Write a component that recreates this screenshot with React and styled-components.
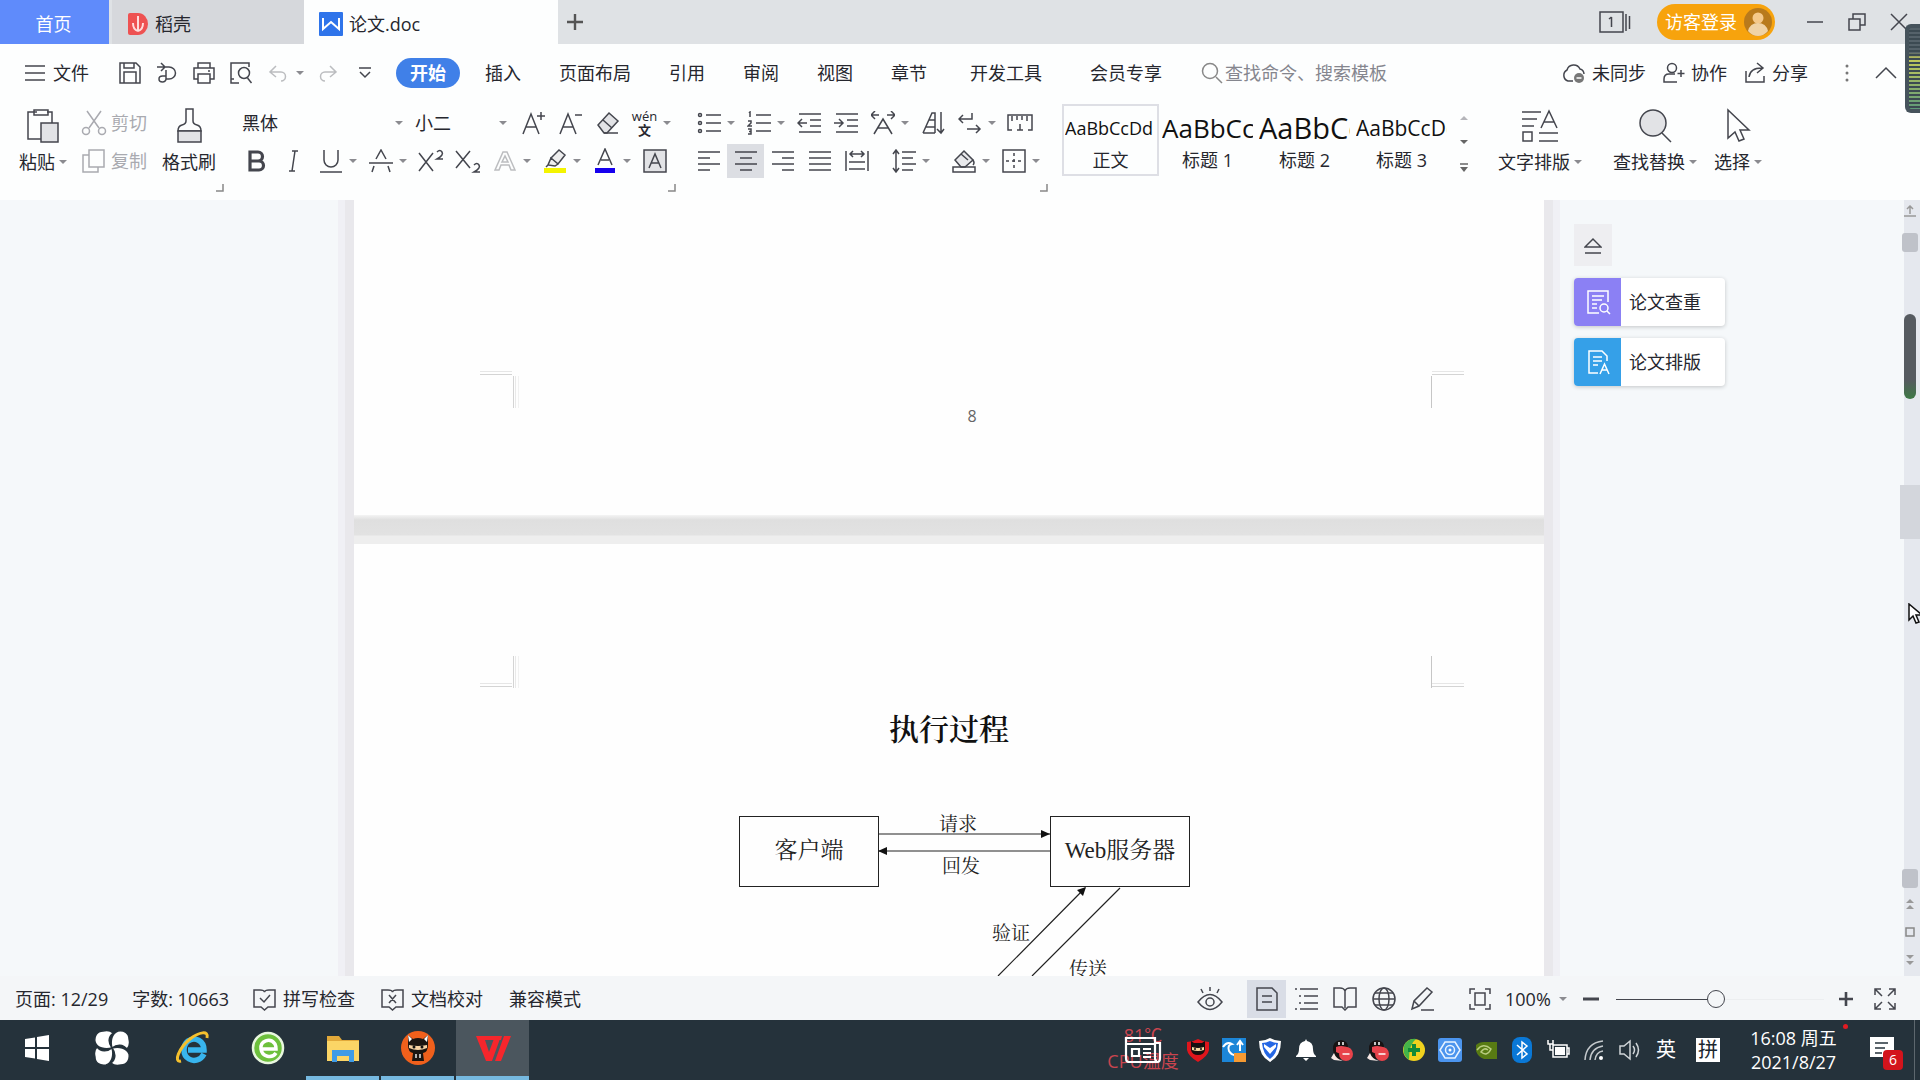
import { useState } from 'react';
import styled, { createGlobalStyle, css } from 'styled-components';

const menus = ['插入', '页面布局', '引用', '审阅', '视图', '章节'];
const menusExtra = ['开发工具', '会员专享'];

const estilos = [
  { muestra: 'AaBbCcDd', nombre: '正文', size: 18 },
  { muestra: 'AaBbCc', nombre: '标题 1', size: 26 },
  { muestra: 'AaBbCc', nombre: '标题 2', size: 29 },
  { muestra: 'AaBbCcDd', nombre: '标题 3', size: 21 },
];

const Icon = ({ w = 24, h = w, box = `0 0 ${w} ${h}`, children, ...rest }) => (
  <Svg width={w} height={h} viewBox={box} aria-hidden="true" {...rest}>
    {children}
  </Svg>
);

const Tool = ({ label, caret, children, ...rest }) => (
  <ToolButton type="button" aria-label={label} $caret={caret} {...rest}>
    <ToolFace>{children}</ToolFace>
    {caret && <Caret />}
  </ToolButton>
);

/* Barra de título con las pestañas */
const TitleBar = () => (
  <TitleRow>
    <HomeTab type="button">首页</HomeTab>
    <Tab type="button">
      <Icon w={22} h={24}>
        <path d="M3 1h8a10 11 0 0 1 0 22H3q-2 0-2-2V3q0-2 2-2z" fill="#ee5252" stroke="none" />
        <path d="M11 4v15M11 19C7 18 6 15 6 11M11 19c4-1 5-4 5-8" stroke="#ffdcdc" strokeWidth="2" />
      </Icon>
      稻壳
    </Tab>
    <Tab type="button" $active>
      <Icon w={24} h={24}>
        <rect width="24" height="24" rx="1" fill="#2f74ea" stroke="none" />
        <path d="M4 6v11l8-7 8 7V6" stroke="#fff" strokeWidth="2" />
      </Icon>
      论文.doc
    </Tab>
    <NewTab type="button" aria-label="新建">
      <Icon w={18}><path d="M9 1v16M1 9h16" strokeWidth="2.4" stroke="#555" /></Icon>
    </NewTab>
    <Spacer />
    <Icon w={32} h={22}>
      <path d="M1 1h23v20H1zM27 3v17M30.500 5v13M12.500 6v10M10 8l2.500-2" />
    </Icon>
    <Login type="button">
      访客登录
      <Icon w={30}>
        <circle cx="15" cy="15" r="14" fill="#b87a1c" stroke="none" />
        <circle cx="15" cy="11" r="5.500" fill="#f5c98a" stroke="none" />
        <path d="M5 24q2-8 10-8t10 8q-4 5-10 5T5 24z" fill="#f0d3a6" stroke="none" />
      </Icon>
    </Login>
    <WindowButton type="button" aria-label="最小化">
      <Icon w={18}><path d="M1 9h16" /></Icon>
    </WindowButton>
    <WindowButton type="button" aria-label="还原">
      <Icon w={20}><path d="M2 7h11v11H2zM6 7V2h12v11h-5" /></Icon>
    </WindowButton>
    <WindowButton type="button" aria-label="关闭">
      <Icon w={20}><path d="M2 2l16 16M18 2L2 18" /></Icon>
    </WindowButton>
  </TitleRow>
);

const MenuBar = () => (
  <MenuRow>
    <FileButton type="button">
      <Icon w={22} h={20}><path d="M1 3h20M1 10h20M1 17h20" /></Icon>
      文件
    </FileButton>
    <Tool label="保存">
      <Icon w={24}><path d="M2 2h16l4 4v16H2zM6 22V11h12v11M6 2v5h10V2" /></Icon>
    </Tool>
    <Tool label="输出为PDF">
      <Icon w={24}><path d="M2 6h12a6.500 6 0 0 1 0 12h-3V9M6 2l4 4-4 4M11 18a3.500 3 0 1 1-3.500-3H11" /></Icon>
    </Tool>
    <Tool label="打印">
      <Icon w={24}><path d="M6 7V2h12v5M6 18H2V7h20v11h-4M6 13h12v9H6zM16 10h2" /></Icon>
    </Tool>
    <Tool label="打印预览">
      <Icon w={24}><path d="M10 22H2V2h18v4M2 18h3" /><circle cx="15" cy="12" r="5.500" /><path d="M18.500 17l4 5" /></Icon>
    </Tool>
    <Tool label="撤销" caret $dim>
      <Icon w={20}><path d="M2 9h11a4.500 4.500 0 0 1 0 9M8 3L2 9l6 5" /></Icon>
    </Tool>
    <Tool label="恢复" $dim>
      <Icon w={20}><path d="M18 9H7a4.500 4.500 0 0 0 0 9M12 3l6 6-6 5" /></Icon>
    </Tool>
    <Tool label="自定义快速访问工具栏">
      <Icon w={14}><path d="M1 2h12M2 6l5 5 5-5" /></Icon>
    </Tool>
    <StartTab type="button">开始</StartTab>
    {menus.map((m) => (
      <MenuButton key={m} type="button">{m}</MenuButton>
    ))}
    {menusExtra.map((m) => (
      <MenuButton key={m} type="button" $wide>{m}</MenuButton>
    ))}
    <Search>
      <Icon w={22}><circle cx="9" cy="9" r="7.500" stroke="#888" /><path d="M15 15l6 6" stroke="#888" /></Icon>
      <input type="text" aria-label="搜索" placeholder="查找命令、搜索模板" />
    </Search>
    <Spacer />
    <MenuActions>
      <button type="button">
        <Icon w={25} h={22}>
          <path d="M12 19H7a6 6 0 0 1-1-11a7 7 0 0 1 13-1a5.500 5.500 0 0 1 4 5" />
          <circle cx="18" cy="16" r="5" fill="#777" stroke="none" /><path d="M15.500 16h5" stroke="#fff" />
        </Icon>
        未同步
      </button>
      <button type="button">
        <Icon w={22}><circle cx="9" cy="6" r="4.500" /><path d="M14 20H1v-3q0-5 5-5h6M18 8v7M14.500 11.500h7" /></Icon>
        协作
      </button>
      <button type="button">
        <Icon w={22}><path d="M2 9v11h18v-6M5 15q1-9 13-9M13 1l6 5-6 5" /></Icon>
        分享
      </button>
      <button type="button" aria-label="更多">
        <Icon w={6} h={20}>
          <circle cx="3" cy="3" r="1.500" fill="#777" stroke="none" />
          <circle cx="3" cy="10" r="1.500" fill="#777" stroke="none" />
          <circle cx="3" cy="17" r="1.500" fill="#777" stroke="none" />
        </Icon>
      </button>
      <button type="button" aria-label="隐藏功能区">
        <Icon w={22} h={14}><path d="M1 12L11 2l10 10" /></Icon>
      </button>
    </MenuActions>
  </MenuRow>
);

const Corner = () => (
  <CornerMark type="button" aria-label="更多选项">
    <Icon w={8}><path d="M7 0v7H0" stroke="#888" /></Icon>
  </CornerMark>
);

const Ribbon = () => (
  <RibbonRow>
    <Group $w={224}>
      <ClipRow>
        <BigTool type="button">
          <Icon w={34} h={36}>
            <path d="M11 4H2v27h13M21 4h5v11M8 2h14v5H8z" />
            <path d="M15 15h17v19H15z" fill="#e2e3e6" />
          </Icon>
          <BigLabel>粘贴<Caret /></BigLabel>
        </BigTool>
        <ClipStack>
          <SmallTool type="button" disabled>
            <Icon w={26}>
              <path d="M6 1l12 17M20 1L8 18" /><circle cx="5" cy="21" r="3.500" /><circle cx="21" cy="21" r="3.500" />
            </Icon>
            剪切
          </SmallTool>
          <SmallTool type="button" disabled>
            <Icon w={26}><path d="M8 2h15v17H8zM8 7H2v17h15v-5" /></Icon>
            复制
          </SmallTool>
        </ClipStack>
        <BigTool type="button">
          <Icon w={34} h={36}>
            <path d="M14 1h7v12q0 3 4 4 4 1 4 6H6q0-5 4-6 4-1 4-4z" />
            <path d="M6 23h23v11H6z" fill="#e2e3e6" />
          </Icon>
          <BigLabel>格式刷</BigLabel>
        </BigTool>
      </ClipRow>
      <Corner />
    </Group>

    <Group $w={452}>
      <ToolRow>
        <Picker $w={173}>
          <select aria-label="字体" defaultValue="黑体"><option>黑体</option></select>
          <Caret />
        </Picker>
        <Picker $w={104}>
          <select aria-label="字号" defaultValue="小二"><option>小二</option></select>
          <Caret />
        </Picker>
        <Tool label="增大字号">
          <Icon w={24}><path d="M1 23L9 3l8 20M4 16h10M19 1v8M15 5h8" /></Icon>
        </Tool>
        <Tool label="减小字号">
          <Icon w={24}><path d="M1 23L9 3l8 20M4 16h10M16 4h7" /></Icon>
        </Tool>
        <Tool label="清除格式">
          <Icon w={24}><path d="M2 14L13 2l9 8-11 12H8z" fill="#e2e3e6" /><path d="M7 9l9 8M8 22h14" /></Icon>
        </Tool>
        <Tool label="拼音指南" caret>
          <Pinyin><span>wén</span><b>文</b></Pinyin>
        </Tool>
      </ToolRow>
      <ToolRow>
        <Tool label="加粗">
          <Icon w={22}><path d="M4 2h8a4.500 4.500 0 0 1 0 9H4zM4 11h9a4.500 4.500 0 0 1 0 9H4z" strokeWidth="3.200" /></Icon>
        </Tool>
        <Tool label="倾斜"><Icon w={20} h={22}><path d="M8 1h6M11 1L8 21M5 21h6" /></Icon></Tool>
        <Tool label="下划线" caret><Icon w={22} h={24}><path d="M4 1v10a7 7 0 0 0 14 0V1M0 23h22" /></Icon></Tool>
        <Tool label="删除线" caret>
          <Icon w={24}><path d="M7 10l5-9 5 9M0 14h24M5 17l-2 6M19 17l2 6" /></Icon>
        </Tool>
        <Tool label="上标">
          <Icon w={26} h={24}><path d="M1 4l14 18M15 4L1 22M19 3q3-3 5 0t-5 7h6" /></Icon>
        </Tool>
        <Tool label="下标">
          <Icon w={26} h={24}><path d="M1 2l14 17M15 2L1 19M19 16q3-3 5 0t-5 7h6" /></Icon>
        </Tool>
        <Tool label="文字效果" caret $dim>
          <Icon w={22}><path d="M1 20L9 2h4l8 18h-4l-2-5H7l-2 5zM8 12h6l-3-6z" /></Icon>
        </Tool>
        <Tool label="突出显示" caret>
          <Icon w={24} h={26}>
            <path d="M8 10l8-8 6 5-7 9zM8 10l7 6-3 2-7-1zM5 17l-2 2" fill="#eee" />
            <rect x="1" y="20" width="22" height="5" fill="#f4f400" stroke="none" />
          </Icon>
        </Tool>
        <Tool label="字体颜色" caret>
          <Icon w={24} h={26}>
            <path d="M5 17L12 1l7 16M8 12h8" />
            <rect x="2" y="20" width="20" height="5" fill="#1700ee" stroke="none" />
          </Icon>
        </Tool>
        <Tool label="字符底纹">
          <Icon w={24}><path d="M1 1h22v22H1z" fill="#e2e3e6" /><path d="M6 19l6-14 6 14M8 14h8" /></Icon>
        </Tool>
      </ToolRow>
      <Corner />
    </Group>

    <Group $w={372}>
      <ToolRow>
        <Tool label="项目符号" caret>
          <Icon w={24}>
            <path d="M9 4h15M9 12h15M9 20h15" />
            <circle cx="3" cy="4" r="1.500" /><circle cx="3" cy="12" r="1.500" /><circle cx="3" cy="20" r="1.500" />
          </Icon>
        </Tool>
        <Tool label="编号" caret>
          <Icon w={24}>
            <path d="M9 4h15M9 12h15M9 20h15M2 2l1-1v5M1 10h3v2l-3 3h4M1 18h3v5H1M2 20.500h2" />
          </Icon>
        </Tool>
        <Tool label="减少缩进">
          <Icon w={24}><path d="M2 3h22M13 9h11M13 15h11M2 21h22M10 12H1M5 8l-4 4 4 4" /></Icon>
        </Tool>
        <Tool label="增加缩进">
          <Icon w={24}><path d="M2 3h22M13 9h11M13 15h11M2 21h22M0 12h9M5 8l4 4-4 4" /></Icon>
        </Tool>
        <Tool label="中文版式" caret>
          <Icon w={24}><path d="M3 23L12 8l9 15M7 17h10M0 4h8M4 0L0 4l4 4M24 4h-8M20 0l4 4-4 4" /></Icon>
        </Tool>
        <Tool label="排序">
          <Icon w={24}><path d="M2 22L11 2h3v20M2 22h3M5 16h9M8 9h6M5 22h9M20 1v21M16 18l4 4 3-4" /></Icon>
        </Tool>
        <Tool label="换行" caret>
          <Icon w={24}><path d="M14 2v6H2M5 4L1 8l4 4M9 18h13M18 14l4 4-4 4" /></Icon>
        </Tool>
        <Tool label="制表位">
          <Icon w={26} h={22}><path d="M5 18H1V3h24v15h-4M5 4v5M10 4v4M15 4v4M20 4v5M10 18h6M13 12v6" /></Icon>
        </Tool>
      </ToolRow>
      <ToolRow>
        <Tool label="左对齐"><Icon w={24}><path d="M1 3h22M1 9h12M1 15h22M1 21h12" /></Icon></Tool>
        <Tool label="居中对齐" $on><Icon w={24}><path d="M1 3h22M6 9h12M1 15h22M6 21h12" /></Icon></Tool>
        <Tool label="右对齐"><Icon w={24}><path d="M1 3h22M11 9h12M1 15h22M11 21h12" /></Icon></Tool>
        <Tool label="两端对齐"><Icon w={24}><path d="M1 3h22M1 9h22M1 15h22M1 21h22" /></Icon></Tool>
        <Tool label="分散对齐">
          <Icon w={24}><path d="M1 2v20M23 2v20M5 5h14M8 2L5 5l3 3M16 2l3 3-3 3M4 13h16M4 20h16" /></Icon>
        </Tool>
        <Gap $w={10} />
        <Tool label="行距" caret>
          <Icon w={24}><path d="M10 3h14M10 9h11M10 15h14M10 21h11M4 1v22M1 5l3-4 3 4M1 19l3 4 3-4" /></Icon>
        </Tool>
        <Gap $w={10} />
        <Tool label="底纹颜色" caret>
          <Icon w={24}>
            <path d="M3 11l9-9 9 9-8 7H9z" fill="#e8e9ec" /><path d="M1 18h22v5H1zM21 11q2 3 0 5M9 5l7 6" />
          </Icon>
        </Tool>
        <Tool label="边框" caret>
          <Icon w={24}><path d="M1 1h22v22H1z" /><path d="M12 4v16M4 12h16" strokeDasharray="3 3" /></Icon>
        </Tool>
      </ToolRow>
      <Corner />
    </Group>

    <Gallery>
      {estilos.map((e, i) => (
        <StyleCard key={e.nombre} type="button" $on={i === 0}>
          <Sample $size={e.size}>{e.muestra}</Sample>
          <span>{e.nombre}</span>
        </StyleCard>
      ))}
      <GalleryArrows>
        <Caret $up />
        <Caret $dark />
        <Icon w={8} h={10}><path d="M0 1h8" stroke="#666" /><path d="M0 4h8L4 9z" fill="#666" stroke="none" /></Icon>
      </GalleryArrows>
    </Gallery>

    <RibbonEnd>
      <BigTool type="button">
        <Icon w={38} h={36}>
          <path d="M1 4h19M1 11h15M1 18h12M2 24h9v9H2zM18 25h19M18 33h19M20 20L28 3l8 17M23 14h10" />
        </Icon>
        <BigLabel>文字排版<Caret /></BigLabel>
      </BigTool>
      <BigTool type="button">
        <Icon w={34} h={36}>
          <circle cx="15" cy="15" r="13" fill="#e2e3e6" /><path d="M24 25l9 9" />
        </Icon>
        <BigLabel>查找替换<Caret /></BigLabel>
      </BigTool>
      <BigTool type="button">
        <Icon w={26} h={36}><path d="M3 2v28l7-6 4 9 5-2-4-9h9z" /></Icon>
        <BigLabel>选择<Caret /></BigLabel>
      </BigTool>
    </RibbonEnd>
  </RibbonRow>
);

/* Marcas de los márgenes de la página */
const Marks = ({ bottom }) => {
  const y = bottom ? 38.5 : 6.5;
  return (
    <MarksRow>
      <Icon w={40}>
        <g strokeWidth="1">
          <path d={`M0 ${y}h32`} stroke="#d4d4d4" />
          <path d={`M0 ${y - 3}h32`} stroke="#e6e6e6" />
          <path d="M33.500 8v32" stroke="#d4d4d4" />
          <path d="M35.500 8v32" stroke="#e9e9e9" />
          <path d="M38.500 8v32" stroke="#f1f1f1" />
        </g>
      </Icon>
      <Icon w={34} h={40}>
        <g strokeWidth="1">
          <path d={`M2 ${y}h32`} stroke="#d4d4d4" />
          <path d={`M2 ${y - 3}h32`} stroke="#e6e6e6" />
          <path d="M1.500 8v32" stroke="#c6c6c6" />
        </g>
      </Icon>
    </MarksRow>
  );
};

const Diagram = () => (
  <Canvas>
    <Arrows width="460" height="170" viewBox="0 0 460 170" aria-hidden="true">
      <g stroke="#222" strokeWidth="1.200" fill="none">
        <path d="M139 18h172M311 35H139M259 160l87-88M293 160l88-88" />
      </g>
      <g fill="#111">
        <path d="M311 18l-9-4v8zM139 35l9-4v8zM347 71l-3 9-6-6z" />
      </g>
    </Arrows>
    <Node $x={0}>客户端</Node>
    <Node $x={311}>Web服务器</Node>
    <Edge $x={200} $y={-3}>请求</Edge>
    <Edge $x={203} $y={39}>回发</Edge>
    <Edge $x={253} $y={106}>验证</Edge>
    <Edge $x={330} $y={142}>传送</Edge>
  </Canvas>
);

const Workspace = () => (
  <WorkArea>
    <span />
    <Pages>
      <PageTop>
        <Marks />
        <PageNumber>8</PageNumber>
      </PageTop>
      <PageGap />
      <PageNext>
        <Marks bottom />
        <DocTitle>执行过程</DocTitle>
        <Diagram />
      </PageNext>
    </Pages>
    <TaskPane>
      <Collapse type="button" aria-label="收起">
        <Icon w={18}><path d="M1 11l8-8 8 8zM1 17h16" /></Icon>
      </Collapse>
      <PaneCard type="button">
        <PaneIcon $color="#8b80f4">
          <Icon w={26}>
            <path d="M23 13V2H3v22h11M7 7h12M7 11h10M7 15h5M7 19h5" stroke="#fff" />
            <circle cx="19" cy="19" r="4" stroke="#fff" /><path d="M22 22l3 3" stroke="#fff" />
          </Icon>
        </PaneIcon>
        论文查重
      </PaneCard>
      <PaneCard type="button">
        <PaneIcon $color="#35a0e8">
          <Icon w={26}>
            <path d="M22 12V7l-5-5H4v22h9M8 8h9M8 12h9M8 16h5M15 25l4.500-10L24 25M17 21h5" stroke="#fff" />
          </Icon>
        </PaneIcon>
        论文排版
      </PaneCard>
    </TaskPane>
    <ScrollRail>
      <Icon w={12}><path d="M6 1v8M3 4l3-3 3 3M0 11h12" stroke="#999" /></Icon>
      <RailButton type="button" aria-label="向上滚动" />
      <MonitorThumb />
      <Thumb />
      <Spacer />
      <RailButton type="button" aria-label="向下滚动" />
      <Icon w={12}><path d="M2 5l4-4 4 4zM2 11l4-4 4 4z" fill="#999" stroke="none" /></Icon>
      <Icon w={12}><path d="M2 2h8v8H2z" stroke="#888" /></Icon>
      <Icon w={12}><path d="M2 1l4 4 4-4zM2 7l4 4 4-4z" fill="#999" stroke="none" /></Icon>
    </ScrollRail>
  </WorkArea>
);

const StatusBar = () => {
  const [zoom, setZoom] = useState(48);

  return (
    <StatusRow>
      <StatusText>页面: 12/29</StatusText>
      <StatusText>字数: 10663</StatusText>
      <StatusButton type="button">
        <Icon w={23} h={24}><path d="M1 3h6q4 0 4.500 2Q12 3 16 3h6v17h-7l-3.500 3L8 20H1zM7 11l4 4 6-7" /></Icon>
        拼写检查
      </StatusButton>
      <StatusButton type="button">
        <Icon w={23} h={24}><path d="M1 3h6q4 0 4.500 2Q12 3 16 3h6v17h-7l-3.500 3L8 20H1zM8 8l7 8M15 8l-7 8" /></Icon>
        文档校对
      </StatusButton>
      <StatusText>兼容模式</StatusText>
      <Spacer />
      <ViewButton type="button" aria-label="护眼模式">
        <Icon w={26} h={26}>
          <path d="M1 16q12-15 24 0-12 15-24 0zM13 1v4M4 3l2 4M22 3l-2 4" /><circle cx="13" cy="16" r="4" />
        </Icon>
      </ViewButton>
      <Gap $w={18} />
      <ViewButton type="button" aria-label="页面视图" $on>
        <Icon w={24}><path d="M2 1h15l5 5v17H2zM7 9h10M7 15h10" /></Icon>
      </ViewButton>
      <ViewButton type="button" aria-label="大纲">
        <Icon w={24}><path d="M6 2h18M10 9h14M10 16h14M6 22h18M1 2h2M5 9h2M5 16h2M1 22h2" /></Icon>
      </ViewButton>
      <ViewButton type="button" aria-label="阅读版式">
        <Icon w={24}><path d="M12 4q-1-3-5-3H1v19h8l3 3 3-3h8V1h-6q-4 0-5 3v17" /></Icon>
      </ViewButton>
      <ViewButton type="button" aria-label="Web版式">
        <Icon w={24}>
          <circle cx="12" cy="12" r="11" /><ellipse cx="12" cy="12" rx="5" ry="11" /><path d="M1 12h22M3 6h18M3 18h18" />
        </Icon>
      </ViewButton>
      <ViewButton type="button" aria-label="写作模式">
        <Icon w={26} h={24}><path d="M2 22l2-8L17 1l5 4L9 19zM4 14l5 5M11 23h13" /></Icon>
      </ViewButton>
      <Gap $w={18} />
      <ViewButton type="button" aria-label="最佳显示比例">
        <Icon w={24}><path d="M7 2H2v5M17 2h5v5M7 22H2v-5M17 22h5v-5M7 6h10v12H7z" /></Icon>
      </ViewButton>
      <Percent>
        <select aria-label="显示比例" defaultValue="100%"><option>100%</option></select>
        <Caret />
      </Percent>
      <ViewButton type="button" aria-label="缩小">
        <Icon w={18}><path d="M1 9h16" strokeWidth="3" /></Icon>
      </ViewButton>
      <ZoomSlider
        type="range"
        aria-label="缩放"
        min="0"
        max="100"
        value={zoom}
        onChange={(e) => setZoom(Number(e.target.value))}
      />
      <ViewButton type="button" aria-label="放大">
        <Icon w={16}><path d="M8 1v14M1 8h14" strokeWidth="2.600" /></Icon>
      </ViewButton>
      <ViewButton type="button" aria-label="全屏显示">
        <Icon w={24}><path d="M9 9L2 2M2 8V2h6M15 9l7-7M16 2h6v6M9 15l-7 7M2 16v6h6M15 15l7 7M22 16v6h-6" /></Icon>
      </ViewButton>
    </StatusRow>
  );
};

const TaskBar = () => (
  <TaskRow>
    <TaskButton type="button" aria-label="开始菜单">
      <Icon w={26}><path d="M1 4l10-1.500V12H1zM13 2l12-2v12H13zM1 14h10v9.500L1 22zM13 14h12v12l-12-2z" fill="#fff" stroke="none" /></Icon>
    </TaskButton>
    <TaskButton type="button" aria-label="壁纸" $last>
      <Icon w={36}>
        <g fill="#fff" stroke="#25323b" strokeWidth="1.400">
          {[0, 90, 180, 270].map((a) => (
            <path
              key={a}
              transform={`rotate(${a} 18 18)`}
              d="M18 18C11 20 3 18 1 12 0 6 3 1 9 1c4-1 8 0 10 2-5 4-5 10-1 15z"
            />
          ))}
        </g>
      </Icon>
    </TaskButton>
    <TaskButton type="button" aria-label="Internet Explorer">
      <Icon w={36}>
        <path d="M29 24c-3 6-10 8-15 5-7-4-6-14-1-18 7-5 16 0 16 9H13" stroke="#38b5ee" strokeWidth="5.500" />
        <path d="M6 31C-2 33 4 18 15 9 24 2 34 0 32 8" stroke="#f5c02d" strokeWidth="3" />
      </Icon>
    </TaskButton>
    <TaskButton type="button" aria-label="360浏览器">
      <Icon w={36}>
        <circle cx="18" cy="18" r="15" fill="#6dc03c" stroke="#e9f7df" strokeWidth="2.500" />
        <path d="M26 23c-4 6-14 4-15-4s9-12 14-5q1 2 1 5H12" stroke="#fff" strokeWidth="3.500" />
      </Icon>
    </TaskButton>
    <TaskButton type="button" aria-label="文件资源管理器" $run>
      <Icon w={34}>
        <path d="M1 5h12l3 4h17v21H1z" fill="#e2a93a" stroke="none" />
        <path d="M1 10h32v20H1z" fill="#fbd566" stroke="none" />
        <path d="M6 31V19h22v12h-5v-6H11v6z" fill="#3f9be6" stroke="none" />
      </Icon>
    </TaskButton>
    <TaskButton type="button" aria-label="忍者" $run>
      <Icon w={36}>
        <circle cx="18" cy="18" r="17" fill="#f0601c" stroke="none" />
        <path d="M8 5l5 4q5-2 10 0l5-4v10q0 7-5 8l1 8H12l1-8q-5-1-5-8z" fill="#1b1512" stroke="none" />
        <path d="M8 5l4 4-3 3zM28 5l-4 4 3 3z" fill="#fff" stroke="none" />
        <path d="M9 15q9 2 18 0v3q-9 4-18 0z" fill="#f6d3a5" stroke="none" />
        <circle cx="14" cy="17" r="1.500" fill="#111" stroke="none" /><circle cx="22" cy="17" r="1.500" fill="#111" stroke="none" />
        <path d="M16 24v4M20 24v4" stroke="#e9e9e9" />
      </Icon>
    </TaskButton>
    <TaskButton type="button" aria-label="WPS" $run $on>
      <Icon w={36} h={30}>
        <path d="M1 3h26l-1 4H10l4 12 6-16h6l-9 25h-6zM20 28l9-25h7l-10 25z" fill="#f6262c" stroke="none" />
      </Icon>
    </TaskButton>
    <Spacer />
    <News>
      <span>81℃</span>
      <span>CPU温度</span>
      <NewsIcon>
        <Icon w={38} h={26}>
          <path d="M31 6h5v15q0 4-3 4H5q-3 0-3-4V1h29v20q0 3 2 3M2 7h29M8 12h7v7H8zM19 12h8M19 16h8M19 20h8" stroke="#fff" strokeWidth="2.200" />
        </Icon>
      </NewsIcon>
    </News>
    <TrayCell>
      <Icon w={24}>
        <path d="M1 4q6 0 11-3 5 3 11 3v8q-1 6-11 12Q2 18 1 12z" fill="#e0151c" stroke="none" />
        <path d="M5 3l3 2h8l3-2v9q-1 5-7 5t-7-5z" fill="#161010" stroke="none" />
        <path d="M6 9q6 2 12 0v3q-6 2-12 0z" fill="#f8d9a0" stroke="none" />
        <path d="M8 11h2M14 11h2" stroke="#111" />
      </Icon>
    </TrayCell>
    <TrayCell>
      <Icon w={24}>
        <rect width="24" height="24" fill="#1c86d8" stroke="none" />
        <path d="M1 9q4-6 9-3-5 1-3 7 3 5 8 4M18 13V4M15 7l3-4 3 4" stroke="#fff" strokeWidth="2" />
        <rect x="12" y="15" width="12" height="9" fill="#f59a32" stroke="none" />
      </Icon>
    </TrayCell>
    <TrayCell>
      <Icon w={24}>
        <path d="M12 0q5 3 11 3 0 15-11 21Q1 18 1 3q6 0 11-3z" fill="#fff" stroke="none" />
        <path d="M12 3q4 2 8 2-1 11-8 16Q5 16 4 5q4 0 8-2z" fill="#2567e4" stroke="none" />
        <path d="M6 6l6 4 6-4v3l-6 7-6-7z" fill="#fff" stroke="none" />
      </Icon>
    </TrayCell>
    <TrayCell>
      <Icon w={24}><path d="M12 1l1 2q6 1 6 8 0 5 3 7v1H2v-1q3-2 3-7 0-7 6-8zM9 20h6l-3 3z" fill="#fff" stroke="none" /></Icon>
    </TrayCell>
    {['qq1', 'qq2'].map((id) => (
      <TrayCell key={id}>
        <Icon w={24}>
          <path d="M3 12q-1-9 8-10 8 1 7 9l3 6-2 4H5z" fill="#171313" stroke="none" />
          <path d="M9 4v3M13 4v3" stroke="#fff" />
          <path d="M6 9q7-3 15 2l-3 4q-8 2-12-1z" fill="#e84550" stroke="none" />
          <path d="M4 15q2 6 9 8l-9-1-3-2z" fill="#f6e7e4" stroke="none" />
          <circle cx="16" cy="16" r="7" fill="#e8434a" stroke="none" /><path d="M12.500 16h7" stroke="#fff" />
        </Icon>
      </TrayCell>
    ))}
    <TrayCell>
      <Icon w={24}>
        <circle cx="12" cy="12" r="11" fill="#f0d21e" stroke="none" />
        <path d="M2 8a11 11 0 0 1 12-7q-7 5-7 21Q0 17 2 8z" fill="#44b549" stroke="none" />
        <path d="M12 6v12M6 12h12" stroke="#118b38" strokeWidth="4" />
      </Icon>
    </TrayCell>
    <TrayCell>
      <Icon w={24}>
        <rect width="24" height="24" rx="3" fill="#4c95ee" stroke="none" />
        <path d="M7 4h10l5 8-5 8H7l-5-8z" stroke="#e8f3ff" /><circle cx="12" cy="12" r="4.500" stroke="#e8f3ff" />
        <circle cx="12" cy="12" r="1.500" fill="#fff" stroke="none" />
      </Icon>
    </TrayCell>
    <TrayCell>
      <Icon w={24}>
        <path d="M2 7q3-3 8-3h13v17H10q-6-2-8-8z" fill="#587b13" stroke="none" />
        <path d="M3 12q6-8 14-1-4 8-10 3 3-5 7-2" stroke="#b9cd80" />
      </Icon>
    </TrayCell>
    <TrayCell>
      <Icon w={20} h={26}>
        <rect width="20" height="26" rx="8" fill="#0a78d6" stroke="none" /><path d="M5 8l10 9-5 4V5l5 4-10 9" stroke="#fff" />
      </Icon>
    </TrayCell>
    <TrayCell>
      <Icon w={24}>
        <path d="M7 7h14v12H7zM21 10h2v6h-2M2 2v4h5V2M4 6v6h3" stroke="#fff" />
        <path d="M9 9h10v8H9z" fill="#fff" stroke="none" />
      </Icon>
    </TrayCell>
    <TrayCell>
      <Icon w={24}>
        <path d="M3 22Q4 5 21 3M8 22Q9 10 21 8M13 22q1-8 8-9" stroke="#c5cacd" />
        <circle cx="19" cy="20" r="2" fill="#fff" stroke="none" />
      </Icon>
    </TrayCell>
    <TrayCell>
      <Icon w={24}><path d="M2 8h4l6-5v18l-6-5H2zM15 8q3 4 0 8M18 5q5 7 0 14" stroke="#d0d5d8" /></Icon>
    </TrayCell>
    <TrayCell><Ime>英</Ime></TrayCell>
    <TrayCell $w={48}><Ime $box>拼</Ime></TrayCell>
    <Clock>
      <span>16:08 周五</span>
      <span>2021/8/27</span>
      <RedDot />
    </Clock>
    <Notice type="button" aria-label="通知">
      <Icon w={26} h={28}>
        <path d="M1 1h24v20h-6l-5 6v-6H1z" fill="#fff" stroke="none" /><path d="M6 7h13M6 12h10M6 17h7" stroke="#26333d" />
      </Icon>
      <Badge>6</Badge>
    </Notice>
  </TaskRow>
);

const App = () => (
  <Screen>
    <GlobalStyle />
    <TitleBar />
    <MenuBar />
    <Ribbon />
    <Workspace />
    <StatusBar />
    <TaskBar />
    <Monitor />
    <Pointer>
      <Icon w={14} h={22}><path d="M1 1v16l4-4 3 7 3-1-3-7h6z" fill="#fff" stroke="#111" /></Icon>
    </Pointer>
  </Screen>
);

export default App;

const GlobalStyle = createGlobalStyle`
  * { box-sizing: border-box; }
  body {
    margin: 0;
    overflow: hidden;
  }
  body, button, input, select {
    font-family: "Open Sans", "Noto Sans CJK SC", sans-serif;
    font-size: 18px;
    line-height: 24px;
    color: #26272e;
  }
  button {
    border: 0;
    padding: 0;
    background: none;
    white-space: nowrap;
  }
  select {
    appearance: none;
    border: 0;
    padding: 0;
    background: none;
  }
`;

const Screen = styled.div`
  position: relative;
  display: flex;
  flex-direction: column;
  height: 100vh;
  overflow: hidden;
  background: #fdfefe;
`;

const Svg = styled.svg`
  display: block;
  flex: none;
  fill: none;
  stroke: #44464e;
  stroke-width: 1.5;
`;

const Spacer = styled.div`
  flex: 1;
`;

const Gap = styled.div`
  width: ${(p) => p.$w}px;
  flex: none;
`;

const Caret = styled.i`
  flex: none;
  width: 0;
  height: 0;
  border-left: 4px solid transparent;
  border-right: 4px solid transparent;
  border-top: 4px solid ${(p) => (p.$dark ? '#666' : '#8b8b90')};
  ${(p) => p.$up && css`
    border-top: 0;
    border-bottom: 4px solid #b5b5ba;
  `}
`;

/* Barra de título */
const TitleRow = styled.header`
  display: flex;
  align-items: center;
  flex: none;
  height: 44px;
  background: #dfe2e5;
`;

const HomeTab = styled.button`
  align-self: stretch;
  width: 109px;
  padding: 4px 2px 0 0;
  margin-right: 3px;
  background: #5f8bfb;
  color: #fff;
`;

const Tab = styled.button`
  display: flex;
  align-items: center;
  align-self: stretch;
  gap: 6px;
  width: ${(p) => (p.$active ? 254 : 192)}px;
  padding: 4px 15px 0;
  background: ${(p) => (p.$active ? '#fdfefe' : '#d6d8dc')};
`;

const NewTab = styled.button`
  margin-left: 8px;
`;

const Login = styled.button`
  display: flex;
  align-items: center;
  justify-content: space-between;
  width: 118px;
  height: 36px;
  margin: 0 19px 0 26px;
  padding: 0 2px 0 8px;
  border-radius: 18px;
  background: #f7a30d;
  color: #fff;
`;

const WindowButton = styled.button`
  display: grid;
  place-items: center;
  width: 42px;
  height: 42px;
`;

/* Menú */
const MenuRow = styled.nav`
  display: flex;
  align-items: center;
  flex: none;
  height: 58px;
  padding: 0 23px 0 24px;
`;

const FileButton = styled.button`
  display: flex;
  align-items: center;
  gap: 7px;
  margin-right: 22px;
`;

const MenuButton = styled.button`
  padding: 0 ${(p) => (p.$wide ? 24 : 19)}px;
`;

const StartTab = styled.button`
  height: 30px;
  margin: 0 6px 0 13px;
  padding: 0 14px;
  border-radius: 15px;
  background: #4080e8;
  color: #fff;
  font-weight: 700;
`;

const Search = styled.label`
  display: flex;
  align-items: center;
  margin-left: 15px;

  input {
    width: 190px;
    border: 0;
    padding: 0 2px;
    background: none;
  }

  input::placeholder {
    color: #85868e;
    opacity: 1;
  }
`;

const MenuActions = styled.div`
  display: flex;
  align-items: center;
  gap: 17px;

  button {
    display: flex;
    align-items: center;
    gap: 6px;
  }

  button:nth-child(4) {
    margin: 0 8px 0 19px;
  }
`;

/* Cinta de opciones */
const RibbonRow = styled.section`
  display: flex;
  flex: none;
  height: 98px;
  padding-top: 2px;
`;

const Group = styled.div`
  display: flex;
  flex-direction: column;
  flex: none;
  width: ${(p) => p.$w}px;

  & + & {
    padding-left: 14px;
  }
`;

const ToolRow = styled.div`
  display: flex;
  align-items: center;
  height: 38px;
`;

const ToolFace = styled.span`
  display: grid;
  place-items: center;
  width: 37px;
  height: 34px;
`;

const ToolButton = styled.button`
  display: flex;
  align-items: center;
  flex: none;
  width: ${(p) => (p.$caret ? 50 : 37)}px;
  height: 34px;
  background: ${(p) => (p.$on ? '#dcdee3' : 'transparent')};

  svg {
    opacity: ${(p) => (p.$dim ? 0.35 : 1)};
  }
`;

const Pinyin = styled.span`
  display: grid;
  justify-items: center;
  font-size: 13px;
  line-height: 14px;
`;

const Picker = styled.div`
  display: flex;
  align-items: center;
  justify-content: space-between;
  flex: none;
  width: ${(p) => p.$w}px;
  padding: 0 8px 0 4px;

  select {
    flex: 1;
  }
`;

const CornerMark = styled.button`
  align-self: flex-end;
  margin-top: 4px;
`;

const ClipRow = styled.div`
  display: flex;
  height: 76px;
  padding-left: 19px;
`;

const BigTool = styled.button`
  display: flex;
  flex-direction: column;
  align-items: center;
  gap: 6px;
  flex: none;
  height: 76px;
  padding-top: 4px;
`;

const BigLabel = styled.span`
  display: flex;
  align-items: center;
  gap: 4px;
`;

const ClipStack = styled.div`
  margin: 0 15px 0 14px;
`;

const SmallTool = styled.button`
  display: flex;
  align-items: center;
  gap: 4px;
  height: 38px;
  color: #a9aab0;

  svg {
    stroke: #a9aab0;
  }
`;

const Gallery = styled.div`
  display: flex;
  flex: none;
  height: 72px;
  margin-left: 14px;
`;

const StyleCard = styled.button`
  display: flex;
  flex-direction: column;
  align-items: center;
  width: 97px;
  padding: 6px 0 0;
  border: 2px solid ${(p) => (p.$on ? '#dedfe5' : 'transparent')};
  overflow: hidden;
`;

const Sample = styled.span`
  width: 91px;
  height: 32px;
  overflow: hidden;
  text-align: left;
  font-size: ${(p) => p.$size}px;
  line-height: 32px;
  margin-bottom: 4px;
  color: #111;
`;

const GalleryArrows = styled.div`
  display: flex;
  flex-direction: column;
  justify-content: space-between;
  align-items: center;
  width: 28px;
  padding: 12px 0 3px;
`;

const RibbonEnd = styled.div`
  display: flex;
  gap: 31px;
  margin-left: 20px;

  button:last-child {
    margin-left: -14px;
  }
`;

/* Documento */
const WorkArea = styled.main`
  display: grid;
  grid-template-columns: 1fr minmax(0, 1190px) 360px 16px;
  grid-template-rows: minmax(0, 1fr);
  flex: 1;
  min-height: 0;
  overflow: hidden;
  background: #f5f8fa;
`;

const Pages = styled.div`
  display: flex;
  flex-direction: column;
  box-shadow: 0 0 0 9px #e9e8ec, 0 0 0 16px #f0f0f5;
`;

const PageTop = styled.article`
  flex: none;
  height: 315px;
  padding-top: 168px;
  background: #fefefe;
`;

const PageGap = styled.div`
  flex: none;
  height: 29px;
  background: linear-gradient(#f4f4f4, #dfdfdf 5px, #e2e2e2 20px, #eee 21px);
`;

const PageNext = styled.article`
  flex: 1;
  min-height: 0;
  padding-top: 104px;
  overflow: hidden;
  background: #fefefe;
`;

const MarksRow = styled.div`
  display: flex;
  justify-content: space-between;
  padding: 0 80px 0 126px;
`;

const PageNumber = styled.p`
  margin: 0;
  padding-left: 46px;
  text-align: center;
  font-size: 16px;
  line-height: 16px;
  color: #666;
`;

const DocTitle = styled.h1`
  margin: 22px 0 66px;
  text-align: center;
  font: 600 30px/40px "Liberation Serif", "Noto Serif CJK SC", "Noto Sans CJK SC", serif;
  color: #111;
`;

const Canvas = styled.div`
  position: relative;
  width: 460px;
  height: 170px;
  margin-left: 385px;
  font-family: "Liberation Serif", "Noto Serif CJK SC", "Noto Sans CJK SC", serif;
  color: #222;
`;

const Arrows = styled.svg`
  position: absolute;
  inset: 0;
`;

const Node = styled.div`
  position: absolute;
  left: ${(p) => p.$x}px;
  top: 0;
  display: grid;
  place-items: center;
  width: 140px;
  height: 71px;
  padding-bottom: 2px;
  border: 1px solid #222;
  font-size: 23px;
`;

const Edge = styled.span`
  position: absolute;
  left: ${(p) => p.$x}px;
  top: ${(p) => p.$y}px;
  font-size: 19px;
`;

const TaskPane = styled.aside`
  display: flex;
  flex-direction: column;
  align-items: flex-start;
  gap: 12px;
  padding: 24px 0 0 30px;
`;

const Collapse = styled.button`
  display: grid;
  place-items: center;
  width: 38px;
  height: 42px;
  background: #eeeef1;
`;

const PaneCard = styled.button`
  display: flex;
  align-items: center;
  gap: 8px;
  width: 151px;
  height: 48px;
  background: #fff;
  border-radius: 4px;
  box-shadow: 0 1px 4px rgba(0, 0, 0, 0.2);
`;

const PaneIcon = styled.span`
  display: grid;
  place-items: center;
  width: 47px;
  height: 48px;
  border-radius: 4px 0 0 4px;
  background: ${(p) => p.$color};
`;

const ScrollRail = styled.div`
  display: flex;
  flex-direction: column;
  align-items: center;
  gap: 16px;
  padding: 5px 4px 10px 0;
  background: #e5e8ee;
`;

const RailButton = styled.button`
  flex: none;
  width: 16px;
  height: 19px;
  margin-bottom: -6px;
  background: #bfc2c9;
  border-radius: 3px;
`;

const MonitorThumb = styled.div`
  flex: none;
  width: 12px;
  height: 85px;
  margin: 52px 0 70px;
  border-radius: 6px;
  background: linear-gradient(#565b60 78%, #3e7a45);
`;

const Thumb = styled.div`
  flex: none;
  width: 20px;
  height: 54px;
  background: #d3d6dc;
`;

/* Barra de estado */
const StatusRow = styled.footer`
  display: flex;
  align-items: center;
  flex: none;
  height: 44px;
  padding: 2px 16px 0 15px;
  background: #f4f6f8;
`;

const StatusText = styled.span`
  margin-right: 24px;
  white-space: nowrap;
`;

const StatusButton = styled.button`
  display: flex;
  align-items: center;
  gap: 7px;
  margin-right: 26px;
`;

const ViewButton = styled.button`
  display: grid;
  place-items: center;
  flex: none;
  width: 39px;
  height: 38px;
  background: ${(p) => (p.$on ? '#d9dde6' : 'transparent')};
`;

const Percent = styled.div`
  display: flex;
  align-items: center;
  gap: 2px;
  width: 64px;
  margin: 0 2px 0 6px;

  select {
    width: 52px;
  }
`;

const ZoomSlider = styled.input`
  appearance: none;
  width: 208px;
  height: 20px;
  margin: 0 2px 0 6px;
  background: linear-gradient(90deg, #44464e 46%, #eceef0 46%) center / 100% 1px no-repeat;

  &::-webkit-slider-thumb {
    appearance: none;
    width: 18px;
    height: 18px;
    border: 1px solid #44464e;
    border-radius: 50%;
    background: #f4f6f8;
  }
`;

/* Barra de tareas */
const TaskRow = styled.footer`
  display: flex;
  align-items: stretch;
  flex: none;
  height: 60px;
  background: #25323b;
  padding-right: 5px;
  color: #fff;
`;

const TaskButton = styled.button`
  display: grid;
  place-items: center;
  flex: none;
  width: 73px;
  margin-right: ${(p) => (p.$last ? 8 : 2)}px;
  border-bottom: 4px solid ${(p) => (p.$run ? '#76b9e0' : 'transparent')};
  background: ${(p) => (p.$on ? '#4b565e' : 'transparent')};
  background-clip: padding-box;
`;

const News = styled.div`
  position: relative;
  display: flex;
  flex-direction: column;
  align-items: center;
  width: 74px;
  padding: 2px 0;
  font-size: 18px;
  line-height: 26px;
  color: #c9454f;
`;

const NewsIcon = styled.span`
  position: absolute;
  left: 18px;
  top: 17px;
`;

const TrayCell = styled.div`
  display: grid;
  place-items: center;
  flex: none;
  width: ${(p) => p.$w || 36}px;
`;

const Ime = styled.span`
  width: 24px;
  text-align: center;
  font-size: 20px;
  ${(p) => p.$box && css`
    background: #fff;
    color: #1c272e;
  `}
`;

const Clock = styled.div`
  position: relative;
  display: flex;
  flex-direction: column;
  align-items: center;
  justify-content: center;
  width: 123px;
  white-space: nowrap;
`;

const RedDot = styled.i`
  position: absolute;
  right: 7px;
  top: 4px;
  width: 5px;
  height: 5px;
  border-radius: 50%;
  background: #e01b22;
`;

const Notice = styled.button`
  position: relative;
  display: grid;
  place-items: center;
  width: 60px;
  padding-right: 6px;
  border-right: 1px solid #5d676e;
`;

const Badge = styled.span`
  position: absolute;
  right: 11px;
  bottom: 10px;
  width: 20px;
  height: 20px;
  border-radius: 4px;
  background: #d3141c;
  color: #fff;
  font-size: 14px;
  line-height: 20px;
`;

/* Medidor flotante en el borde derecho */
const Monitor = styled.div`
  position: absolute;
  right: 0;
  top: 24px;
  width: 15px;
  height: 89px;
  border: 4px solid #46535c;
  border-right: 0;
  border-radius: 6px 0 0 6px;
  background: repeating-linear-gradient(transparent 0 2px, #3c4a52 2px 4px),
    linear-gradient(#55626a 30%, #c3c95a 38%, #5f9a78);
`;

const Pointer = styled.div`
  position: absolute;
  right: -2px;
  top: 603px;
`;
